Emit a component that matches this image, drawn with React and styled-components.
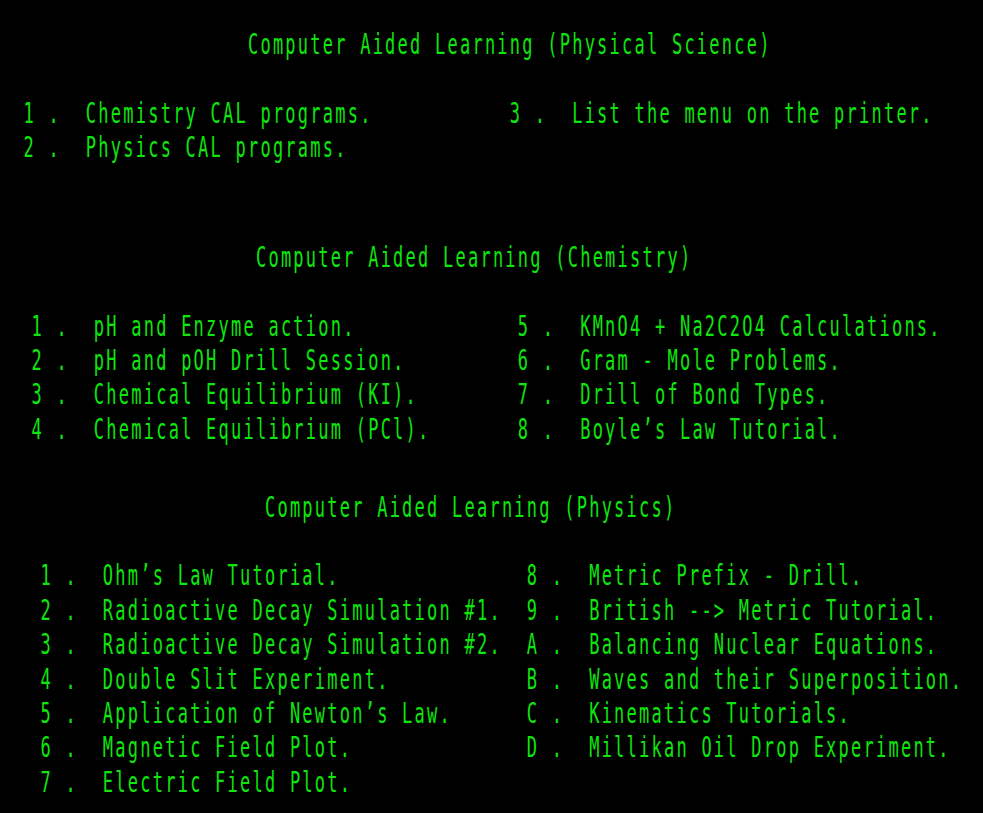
import React from "react";
import styled, { createGlobalStyle } from "styled-components";

const CELL = 12.47;
const ROW = 34.4;
const FONT = 17;
const GREEN = "#0ee60e";

const Global = createGlobalStyle`
  html, body {
    margin: 0;
    padding: 0;
    background: #000;
  }
  body {
    min-height: 813px;
    overflow: hidden;
  }
`;

const Screen = styled.div`
  width: 983px;
  height: 813px;
  background: #000;
  color: ${GREEN};
  font-family: "DejaVu Sans Mono", "Liberation Mono", monospace;
  font-size: ${FONT}px;
  letter-spacing: ${CELL - FONT * 0.60205}px;
  padding-top: ${44 - ROW / 2}px;
  box-sizing: border-box;
  overflow: hidden;
`;

const Section = styled.section`
  padding-left: ${(p) => p.$offset}px;
  margin-top: ${(p) => p.$gap || 0}px;
`;

const Line = styled.div`
  height: ${ROW}px;
  line-height: ${ROW}px;
  white-space: pre;
  display: flex;
  align-items: center;
`;

const Glyphs = styled.span`
  display: inline-block;
  transform: scaleY(1.7);
  transform-origin: center;
`;

const Title = styled(Line)`
  padding-left: ${18 * CELL}px;
  margin-bottom: ${ROW}px;
`;

const Menu = styled.div`
  display: grid;
  grid-template-columns: ${39 * CELL}px auto;
  grid-template-rows: repeat(${(p) => p.$rows}, ${ROW}px);
  grid-auto-flow: column;
`;

const Key = styled.span`
  display: inline-block;
  width: ${5 * CELL}px;
`;

function Item({ k, label }) {
  return (
    <Line>
      <Glyphs>
        <Key>{`${k} .`}</Key>
        {label}
      </Glyphs>
    </Line>
  );
}

const sections = [
  {
    title: "Computer Aided Learning (Physical Science)",
    offset: 23.5,
    gap: 0,
    rows: 2,
    items: [
      ["1", "Chemistry CAL programs."],
      ["2", "Physics CAL programs."],
      ["3", "List the menu on the printer."],
    ],
  },
  {
    title: "Computer Aided Learning (Chemistry)",
    offset: 31.5,
    gap: 75.4,
    rows: 4,
    items: [
      ["1", "pH and Enzyme action."],
      ["2", "pH and pOH Drill Session."],
      ["3", "Chemical Equilibrium (KI)."],
      ["4", "Chemical Equilibrium (PCl)."],
      ["5", "KMnO4 + Na2C2O4 Calculations."],
      ["6", "Gram - Mole Problems."],
      ["7", "Drill of Bond Types."],
      ["8", "Boyle\u2019s Law Tutorial."],
    ],
  },
  {
    title: "Computer Aided Learning (Physics)",
    offset: 40.5,
    gap: 43.6,
    rows: 7,
    items: [
      ["1", "Ohm\u2019s Law Tutorial."],
      ["2", "Radioactive Decay Simulation #1."],
      ["3", "Radioactive Decay Simulation #2."],
      ["4", "Double Slit Experiment."],
      ["5", "Application of Newton\u2019s Law."],
      ["6", "Magnetic Field Plot."],
      ["7", "Electric Field Plot."],
      ["8", "Metric Prefix - Drill."],
      ["9", "British --> Metric Tutorial."],
      ["A", "Balancing Nuclear Equations."],
      ["B", "Waves and their Superposition."],
      ["C", "Kinematics Tutorials."],
      ["D", "Millikan Oil Drop Experiment."],
    ],
  },
];

export default function App() {
  return (
    <>
      <Global />
      <Screen>
        {sections.map((s) => (
          <Section key={s.title} $offset={s.offset} $gap={s.gap}>
            <Title>
              <Glyphs>{s.title}</Glyphs>
            </Title>
            <Menu $rows={s.rows}>
              {s.items.map(([k, label]) => (
                <Item key={k} k={k} label={label} />
              ))}
            </Menu>
          </Section>
        ))}
      </Screen>
    </>
  );
}
